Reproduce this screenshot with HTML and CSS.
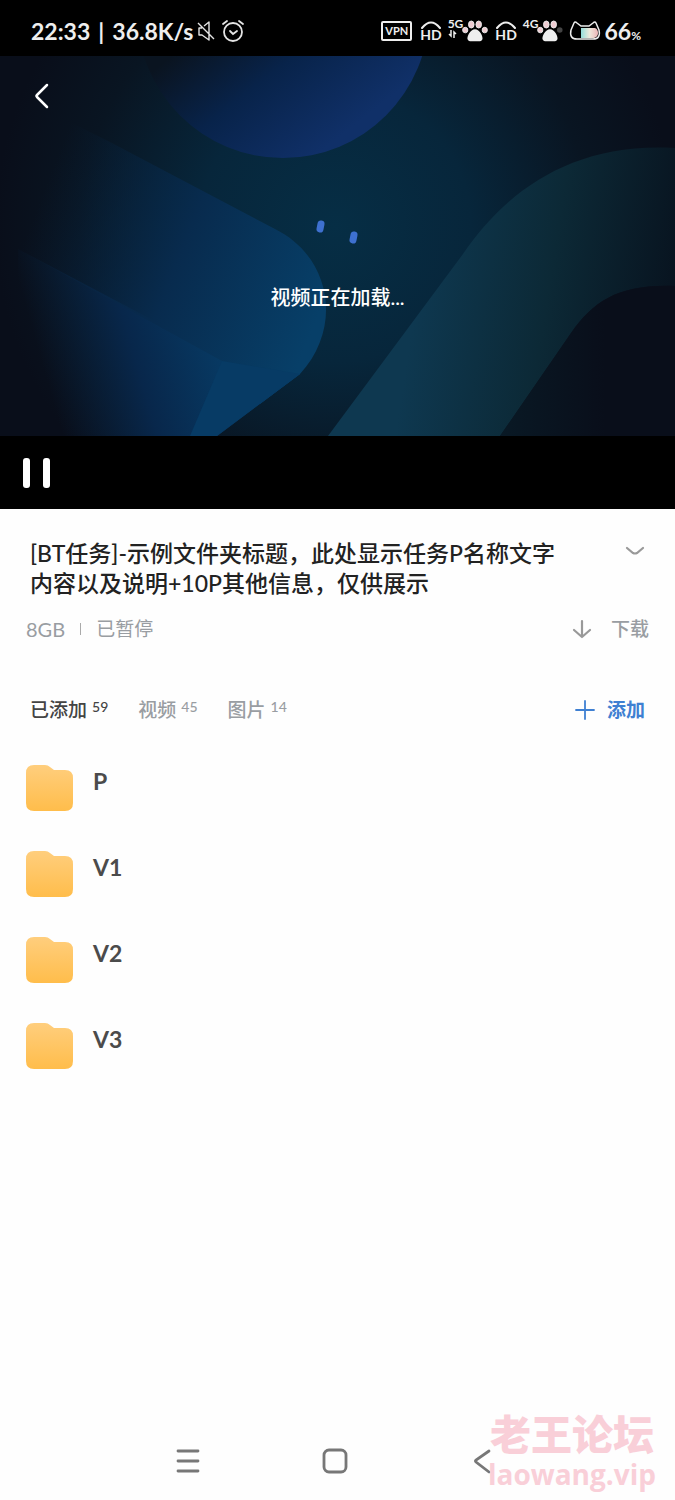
FILE: index.html
```
<!DOCTYPE html>
<html lang="zh-CN">
<head>
<meta charset="utf-8">
<meta name="viewport" content="width=device-width, initial-scale=1">
<title>云盘任务</title>
<link rel="stylesheet" href="styles.css">
</head>
<body>
<header class="status">
  <div class="status-left">
    <span class="clock"><span>22:33</span><span>|</span><span>36.8K/s</span></span>
    <svg class="icon" width="18" height="20" viewBox="0 0 18 20" fill="none" stroke="#e4e4e4" stroke-width="1.4" stroke-linejoin="round"><path d="M5 7H2v7h3l7 5V1L7 5M1 2l16 16"/></svg>
    <svg class="icon alarm" width="24" height="24" viewBox="0 0 24 24" fill="none" stroke="#e4e4e4" stroke-width="1.8" stroke-linecap="round"><circle cx="12" cy="13" r="9"/><path d="M2 5l4-3M22 5l-4-3M9 12l3 3 4-3"/></svg>
  </div>
  <div class="status-right">
    <span class="vpn">VPN</span>
    <span class="hd"><svg width="20" height="8" viewBox="0 0 20 8" fill="none" stroke="#eee" stroke-width="2" stroke-linecap="round"><path d="M1 7Q10-4 19 7"/></svg>HD</span>
    <span class="net"><span>5G</span><svg width="9" height="8" viewBox="0 0 9 8" fill="none" stroke="#eee" stroke-width="1.5"><path d="M1 4l2 2V0M8 4L6 2v6"/></svg></span>
    <svg class="paw" width="26" height="24" viewBox="0 0 28 24"><g fill="#efccd2" stroke="#eee"><ellipse cx="3.500" cy="11" rx="2.800" ry="3"/><ellipse cx="10" cy="5" rx="3" ry="3.800"/><ellipse cx="18" cy="5" rx="3" ry="3.800"/><ellipse cx="24.500" cy="11" rx="2.800" ry="3"/></g><path d="M14 10c5 0 9 8 8 11s-5 2-8 2-7 1-8-2 3-11 8-11z" fill="#eee"/></svg>
    <span class="hd hd-second"><svg width="20" height="8" viewBox="0 0 20 8" fill="none" stroke="#eee" stroke-width="2" stroke-linecap="round"><path d="M1 7Q10-4 19 7"/></svg>HD</span>
    <span class="net"><span>4G</span></span>
    <svg class="paw" width="26" height="24" viewBox="0 0 28 24"><g fill="#efccd2" stroke="#eee"><ellipse cx="3.500" cy="11" rx="2.800" ry="3"/><ellipse cx="10" cy="5" rx="3" ry="3.800"/><ellipse cx="18" cy="5" rx="3" ry="3.800"/></g><circle cx="24.500" cy="11" r="3" fill="#444"/><path d="M14 10c5 0 9 8 8 11s-5 2-8 2-7 1-8-2 3-11 8-11z" fill="#eee"/></svg>
    <svg class="battery" width="32" height="22" viewBox="0 0 32 22"><defs><linearGradient id="cat"><stop stop-color="#94dedb"/><stop offset=".5" stop-color="#eee9dc"/><stop offset="1" stop-color="#edb6b8"/></linearGradient></defs><path d="M12 8h14q3 1 3 5t-4 5H12z" fill="url(#cat)"/><path d="M2 10L5 3q1-2 3 0l4 3h8l4-3q2-2 3 0l3 7q2 9-6 9H8q-8 0-6-9z" fill="none" stroke="#eee" stroke-width="1.500"/></svg>
    <span class="percent">66<small>%</small></span>
  </div>
</header>

<section class="player">
  <div class="video">
    <svg class="art" viewBox="0 0 675 380" preserveAspectRatio="xMidYMid slice" aria-hidden="true">
      <defs>
        <radialGradient id="bg" gradientUnits="userSpaceOnUse" cx="335" cy="170" r="340"><stop stop-color="#062e45"/><stop offset=".4" stop-color="#07263b"/><stop offset=".75" stop-color="#091522"/><stop offset="1" stop-color="#090e1a"/></radialGradient>
        <linearGradient id="disc" x1=".25" y1=".55" x2=".6" y2="1"><stop stop-color="#0a1420"/><stop offset=".45" stop-color="#08234a"/><stop offset="1" stop-color="#103068"/></linearGradient>
        <linearGradient id="band" gradientUnits="userSpaceOnUse" x1="30" y1="170" x2="310" y2="280"><stop stop-color="#072039" stop-opacity="0"/><stop offset=".5" stop-color="#082b4e"/><stop offset="1" stop-color="#073f68"/></linearGradient>
        <linearGradient id="fold" gradientUnits="userSpaceOnUse" x1="60" y1="370" x2="235" y2="320"><stop stop-color="#082442" stop-opacity="0"/><stop offset=".5" stop-color="#08274b"/><stop offset="1" stop-color="#073b65"/></linearGradient>
        <linearGradient id="arch" gradientUnits="userSpaceOnUse" x1="420" y1="220" x2="675" y2="260"><stop stop-color="#0e3850"/><stop offset=".5" stop-color="#0c2936"/><stop offset="1" stop-color="#08131f"/></linearGradient>
        <linearGradient id="inner" x1="0" x2="1"><stop stop-color="#091925"/><stop offset=".6" stop-color="#090e1a"/></linearGradient>
      </defs>
      <path d="M0 0h675v380H0z" fill="url(#bg)"/>
      <circle cx="283" cy="-44" r="146" fill="url(#disc)"/>
      <path d="M18 193L240 310L300 318L217 380H18z" fill="url(#fold)"/>
      <path d="M110 86L275 173C330 200 344 270 300 318L260 348L222 305L18 193V40z" fill="url(#band)"/>
      <path d="M300 318L217 380H190L222 305z" fill="#073b65"/>
      <path d="M328 380L463 198C505 137 570 86 675 92V230C620 228 594 244 571 277L500 380z" fill="url(#arch)"/>
      <path d="M500 380L571 277C594 244 620 228 675 230V380z" fill="url(#inner)"/>
    </svg>
    <button class="back" aria-label="返回"><svg width="16" height="26" viewBox="0 0 16 26" fill="none" stroke="#fff" stroke-width="2.500" stroke-linecap="round" stroke-linejoin="round"><path d="M13 2L3 12q-1 1 0 2l10 10"/></svg></button>
    <div class="loading" role="status">
      <svg width="46" height="26" viewBox="0 0 46 26" stroke="#3e70cf" stroke-width="7" stroke-linecap="round"><path d="M6 10l1-5M39 21l1-5"/></svg>
      <span>视频正在加载...</span>
    </div>
  </div>
  <div class="controls">
    <button aria-label="暂停"><svg width="28" height="30" viewBox="0 0 28 30" fill="#fff"><rect width="7" height="30" rx="3"/><rect x="20" width="7" height="30" rx="3"/></svg></button>
  </div>
</section>

<main class="content">
  <div class="heading">
    <h1>[BT任务]-示例文件夹标题，此处显示任务P名称文字<br>内容以及说明+10P其他信息，仅供展示</h1>
    <button aria-label="展开"><svg width="20" height="10" viewBox="0 0 20 10" fill="none" stroke="#999" stroke-width="2.200" stroke-linecap="round"><path d="M2 2l6 5q2 1 4 0l6-5"/></svg></button>
  </div>
  <div class="meta">
    <span class="size">8GB</span><i class="divider"></i><span>已暂停</span>
    <button class="download"><svg width="20" height="20" viewBox="0 0 20 20" fill="none" stroke="#999" stroke-width="2.200" stroke-linecap="round" stroke-linejoin="round"><path d="M10 2v16M2 11l8 7 8-7"/></svg>下载</button>
  </div>
  <nav class="tabs">
    <button class="active">已添加<sup>59</sup></button>
    <button>视频<sup>45</sup></button>
    <button>图片<sup>14</sup></button>
    <button class="add"><svg width="20" height="20" viewBox="0 0 20 20" stroke="#3f80d2" stroke-width="1.800" stroke-linecap="round"><path d="M10 1v18M1 10h18"/></svg>添加</button>
  </nav>
  <svg width="0" height="0" class="defs" aria-hidden="true"><defs><linearGradient id="folder-fill" x2="0" y2="1"><stop stop-color="#ffce7d"/><stop offset="1" stop-color="#ffbd4b"/></linearGradient><symbol id="folder" viewBox="0 0 48 48"><path d="M8 1h11q3 0 5 2l4 3h11q8 0 8 8v25q0 8-8 8H8q-8 0-8-8V9q0-8 8-8z" fill="url(#folder-fill)"/></symbol></defs></svg>
  <ul class="files">
    <li><svg class="folder"><use href="#folder"/></svg><span>P</span></li>
    <li><svg class="folder"><use href="#folder"/></svg><span>V1</span></li>
    <li><svg class="folder"><use href="#folder"/></svg><span>V2</span></li>
    <li><svg class="folder"><use href="#folder"/></svg><span>V3</span></li>
  </ul>
</main>

<footer class="system">
  <button aria-label="最近任务"><svg width="26" height="26" viewBox="0 0 26 26" stroke="#777" stroke-width="2.800" stroke-linecap="round"><path d="M3 3h20M3 13h20M3 23h20"/></svg></button>
  <button aria-label="主页"><svg width="26" height="26" viewBox="0 0 26 26" fill="none" stroke="#777" stroke-width="2.800"><rect x="2" y="2" width="22" height="22" rx="5"/></svg></button>
  <button aria-label="返回"><svg width="26" height="26" viewBox="0 0 26 26" fill="none" stroke="#777" stroke-width="2.800" stroke-linecap="round"><path d="M20 3L7 12q-1 1 0 2l13 10"/></svg></button>
  <div class="watermark"><strong>老王论坛</strong><span>laowang.vip</span></div>
</footer>
</body>
</html>
```
FILE: styles.css
```
* { box-sizing: border-box; }
body {
  margin: 0;
  min-height: 100vh;
  display: flex;
  flex-direction: column;
  background: #fefefe;
  font-family: Lato, "Noto Sans CJK SC", sans-serif;
}
button { padding: 0; border: 0; background: none; color: inherit; font: inherit; cursor: pointer; }
svg { display: block; flex: none; }
.status {
  height: 56px;
  padding: 6px 34px 0 31px;
  display: flex;
  align-items: center;
  justify-content: space-between;
  background: #000;
  color: #eee;
}
.status-left, .status-right { display: flex; align-items: center; }
.clock { display: flex; gap: 8px; font-size: 23px; font-weight: 700; white-space: nowrap; }
.icon { margin-left: 4px; }
.alarm { margin-left: 6px; }
.vpn {
  border: 2px solid #eee;
  border-radius: 2px;
  padding: 0 2px;
  font-size: 11px;
  line-height: 16px;
  font-weight: 700;
  margin-right: 8px;
}
.hd { display: flex; flex-direction: column; align-items: center; font-size: 14px; line-height: 12px; font-weight: 700; }
.hd-second { margin-left: 7px; }
.net { display: flex; flex-direction: column; align-self: flex-start; margin-left: 6px; height: 22px; font-size: 12px; line-height: 13px; font-weight: 700; }
.net + .paw { margin-left: -1px; }
.battery { margin-left: 6px; }
.percent { margin-left: 3px; font-size: 23px; font-weight: 700; }
.percent small { font-size: 12px; }
.video { display: grid; aspect-ratio: 675 / 380; background: #090e1a; color: #fff; }
.video > * { grid-area: 1 / 1; }
.art { width: 100%; height: 100%; }
.back { place-self: start; margin: 27px 34px; }
.loading {
  place-self: center;
  padding-top: 38px;
  display: flex;
  flex-direction: column;
  align-items: center;
  gap: 38px;
  font-size: 20px;
  line-height: 28px;
  font-weight: 500;
}
.controls { height: 73px; padding: 0 23px; display: flex; align-items: center; background: #000; }
.content { flex: 1; padding: 29px 26px 0; }
.heading { display: flex; justify-content: space-between; align-items: flex-start; padding: 0 4px; }
.heading h1 { flex: 1; margin: 0; font-size: 23px; line-height: 30px; font-weight: 500; color: #222; white-space: nowrap; }
.heading button { padding: 8px 0; }
.meta { margin-top: 17px; display: flex; align-items: center; font-size: 19px; line-height: 28px; color: #999da2; }
.size { font-size: 20px; }
.divider { width: 1px; height: 12px; margin: 0 15px; background: #aaa; }
.download { margin-left: auto; display: flex; align-items: center; gap: 19px; font-weight: 500; }
.tabs { margin-top: 53px; padding: 0 4px; display: flex; gap: 30px; font-size: 19px; line-height: 28px; color: #999da2; font-weight: 500; }
.tabs .active { color: #444; }
.tabs sup { margin-left: 5px; font-size: 14px; line-height: 14px; vertical-align: 5px; }
.tabs .add { margin-left: auto; display: flex; align-items: center; gap: 12px; color: #3f80d2; font-weight: 700; }
.defs { position: absolute; }
.files { margin: 40px 0 0; padding: 0; list-style: none; display: grid; gap: 38px; }
.files li { display: flex; gap: 19px; color: #4b4b4b; font-size: 23px; line-height: 34px; font-weight: 700; }
.folder { width: 48px; height: 48px; }
.system { position: relative; height: 92px; padding: 14px 180px 0 175px; display: flex; align-items: center; justify-content: space-between; }
.watermark {
  position: absolute;
  right: 19px;
  top: 4px;
  display: flex;
  flex-direction: column;
  align-items: center;
  color: #f9cfd8;
  font-family: "Open Sans", "Noto Sans CJK SC", sans-serif;
  font-weight: 700;
}
.watermark strong { font-size: 41px; line-height: 44px; }
.watermark span { font-size: 28px; line-height: 36px; }
```
